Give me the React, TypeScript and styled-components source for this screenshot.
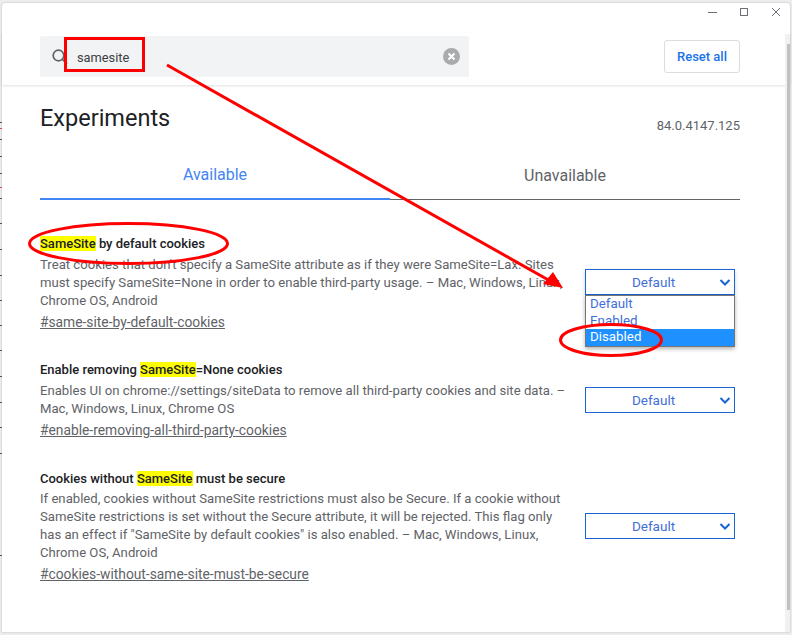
import React from "react";
import styled, { createGlobalStyle } from "styled-components";

const Global = createGlobalStyle`
  html, body { margin: 0; padding: 0; background: #e8e8e8; }
  body { font-family: Roboto, "Liberation Sans", sans-serif; overflow: hidden; }
`;

const Stage = styled.div`
  position: relative;
  width: 792px;
  height: 635px;
  overflow: hidden;
  background: #ededed;
  padding: 3px 2px 3px 2px;
  box-sizing: border-box;
`;

const Tick = styled.i<{ $top: number; $red?: boolean }>`
  position: absolute;
  left: 0;
  width: 2px;
  height: 1px;
  top: ${(p) => p.$top}px;
  background: ${(p) => (p.$red ? "#e04848" : "#555")};
`;

const Win = styled.div`
  position: relative;
  width: 100%;
  height: 100%;
  background: #fff;
  border-radius: 3px 3px 0 0;
  display: flex;
  flex-direction: column;
  box-shadow: 0 0 2px rgba(0, 0, 0, 0.25);
`;

const Caption = styled.div`
  height: 30px;
  display: flex;
  justify-content: flex-end;
  align-items: flex-start;
  padding: 1px 5px 0 0;
  box-sizing: border-box;
  gap: 15px;
  color: #6b6f75;
  flex: none;
`;

const CapBtn = styled.svg`
  width: 17px;
  height: 17px;
  display: block;
`;

const Header = styled.header`
  height: 52px;
  flex: none;
  display: flex;
  align-items: flex-start;
  justify-content: space-between;
  padding: 3px 50px 0 38px;
  box-sizing: border-box;
  box-shadow: 0 1px 2px rgba(0, 0, 0, 0.12);
  position: relative;
  z-index: 1;
`;

const Search = styled.div`
  width: 429px;
  height: 41px;
  background: #f1f3f4;
  border-radius: 2px;
  display: flex;
  align-items: center;
  box-sizing: border-box;
  padding: 0 9px 0 11px;
  color: #5f6368;
`;

const SearchText = styled.span`
  flex: 1;
  font-size: 12.8px;
  color: #3c4043;
  margin-left: 8px;
  margin-top: 1px;
`;

const ResetBtn = styled.button`
  width: 76px;
  height: 33px;
  margin-top: 4px;
  background: #fff;
  border: 1px solid #dadce0;
  border-radius: 3px;
  font: 500 13px Roboto, sans-serif;
  color: #1a73e8;
  padding: 0;
`;

const Scroll = styled.div`
  flex: 1;
  display: flex;
  min-height: 0;
`;

const Main = styled.main`
  flex: 1;
  padding: 0 45px 0 38px;
`;

const ScrollBar = styled.div`
  width: 5px;
  flex: none;
  background: #f1f1f1;
  margin-top: -51px;
  position: relative;
  z-index: 2;
  display: flex;
  flex-direction: column;
  align-items: flex-end;
`;

const Thumb = styled.div`
  margin-top: 10px;
  width: 3px;
  height: 566px;
  background: #c1c1c1;
`;

const TitleRow = styled.div`
  display: flex;
  justify-content: space-between;
  align-items: flex-start;
  padding-top: 18px;
  height: 35px;
`;

const H1 = styled.h1`
  margin: 0;
  font-size: 23.5px;
  line-height: 30px;
  font-weight: 400;
  color: #202124;
`;

const Version = styled.span`
  margin-top: 15px;
  font-size: 13px;
  line-height: 16px;
  color: #5f6368;
`;

const Tabs = styled.div`
  display: flex;
  margin-top: 9px;
  height: 53px;
`;

const Tab = styled.div<{ $active?: boolean }>`
  flex: 1;
  box-sizing: border-box;
  border-bottom: ${(p) => (p.$active ? "2px solid #4285f4" : "1px solid #5f6368")};
  color: ${(p) => (p.$active ? "#4285f4" : "#5f6368")};
  text-align: center;
  font-size: 16px;
  line-height: 20px;
  padding-top: ${(p) => (p.$active ? 18 : 19)}px;
`;

const Flag = styled.section<{ $mt: number }>`
  display: flex;
  justify-content: space-between;
  margin-top: ${(p) => p.$mt}px;
`;

const FlagText = styled.div`
  width: 530px;
`;

const FlagTitle = styled.h2`
  margin: 0;
  font-size: 13px;
  line-height: 16px;
  font-weight: 500;
  color: #202124;
`;

const Mark = styled.mark`
  background: #ffff00;
  color: #202124;
`;

const Desc = styled.p<{ $mt?: number }>`
  margin: ${(p) => p.$mt ?? 4}px 0 0;
  font-size: 13.15px;
  line-height: 18px;
  color: #5f6368;
`;

const Link = styled.a`
  display: block;
  margin-top: 3px;
  font-size: 13.8px;
  line-height: 18px;
  color: #5f6368;
  text-decoration: underline;
`;

const SelectBox = styled.div<{ $mt: number; $shadow?: boolean }>`
  width: 150px;
  height: 26px;
  box-sizing: border-box;
  margin: ${(p) => p.$mt}px 5px 0 0;
  border: 1px solid #1a65d1;
  display: flex;
  align-items: center;
  position: relative;
  color: #3f6fd8;
  font-size: 13.5px;
  flex: none;
  ${(p) => (p.$shadow ? "box-shadow: 0 2px 4px rgba(0,0,0,.2);" : "")}
`;

const SelectLabel = styled.span`
  flex: 1;
  text-align: center;
  padding-right: 13px;
`;

const Chev = styled.svg`
  position: absolute;
  right: 3px;
  top: 7px;
  width: 12px;
  height: 10px;
`;

const Menu = styled.ul`
  position: absolute;
  left: 583px;
  top: 292px;
  width: 150px;
  box-sizing: border-box;
  height: 52px;
  margin: 0;
  padding: 0;
  list-style: none;
  background: #fff;
  border: 1px solid #767676;
  box-shadow: 0 2px 4px rgba(0, 0, 0, 0.3);
  z-index: 3;
  font-size: 13.33px;
`;

const MenuItem = styled.li<{ $sel?: boolean }>`
  height: 16.67px;
  line-height: 16px;
  padding-left: 4px;
  background: ${(p) => (p.$sel ? "#1e90ff" : "transparent")};
  color: ${(p) => (p.$sel ? "#fff" : "#3f6fd8")};
`;

const Overlay = styled.svg`
  position: absolute;
  left: 0;
  top: 0;
  width: 792px;
  height: 635px;
  z-index: 5;
  pointer-events: none;
`;

const Chevron = () => (
  <Chev viewBox="0 0 12 10">
    <path d="M1.5 3 L6 7.5 L10.5 3" fill="none" stroke="#1a65d1" strokeWidth="2" />
  </Chev>
);

const Select = ({ mt, shadow }: { mt: number; shadow?: boolean }) => (
  <SelectBox $mt={mt} $shadow={shadow}>
    <SelectLabel>Default</SelectLabel>
    <Chevron />
  </SelectBox>
);

const ticks = [122, 128, 139, 156, 173, 187, 198, 223, 249, 275, 300, 325, 350, 376, 402, 427, 453, 555];

export default function App() {
  return (
    <Stage>
      <Global />
      {ticks.map((t) => (
        <Tick key={t} $top={t} $red={t === 128 || t === 187} />
      ))}
      <Win>
        <Caption>
          <CapBtn viewBox="0 0 17 17">
            <path d="M4 8.5h9" stroke="currentColor" fill="none" />
          </CapBtn>
          <CapBtn viewBox="0 0 17 17">
            <rect x="4.5" y="4.5" width="7" height="7" stroke="currentColor" fill="none" />
          </CapBtn>
          <CapBtn viewBox="0 0 17 17">
            <path d="M4 4l8 8M12 4l-8 8" stroke="currentColor" fill="none" />
          </CapBtn>
        </Caption>
        <Header>
          <Search>
            <svg width="18" height="18" viewBox="0 0 18 18">
              <circle cx="7.5" cy="7.5" r="5.3" fill="none" stroke="#5f6368" strokeWidth="1.7" />
              <path d="M11.5 11.5l4.5 4.5" stroke="#5f6368" strokeWidth="1.7" />
            </svg>
            <SearchText>samesite</SearchText>
            <svg width="17" height="17" viewBox="0 0 17 17">
              <circle cx="8.5" cy="8.5" r="8.5" fill="#a9abaf" />
              <path d="M5.5 5.5l6 6M11.5 5.5l-6 6" stroke="#fff" strokeWidth="2" />
            </svg>
          </Search>
          <ResetBtn>Reset all</ResetBtn>
        </Header>
        <Scroll>
          <Main>
            <TitleRow>
              <H1>Experiments</H1>
              <Version>84.0.4147.125</Version>
            </TitleRow>
            <Tabs>
              <Tab $active>Available</Tab>
              <Tab>Unavailable</Tab>
            </Tabs>
            <Flag $mt={36}>
              <FlagText>
                <FlagTitle>
                  <Mark>SameSite</Mark> by default cookies
                </FlagTitle>
                <Desc>
                  Treat cookies that don't specify a SameSite attribute as if they were SameSite=Lax. Sites must specify
                  SameSite=None in order to enable third-party usage. – Mac, Windows, Linux, Chrome OS, Android
                </Desc>
                <Link>#same-site-by-default-cookies</Link>
              </FlagText>
              <Select mt={33} shadow />
            </Flag>
            <Flag $mt={31}>
              <FlagText>
                <FlagTitle>
                  Enable removing <Mark>SameSite</Mark>=None cookies
                </FlagTitle>
                <Desc>
                  Enables UI on chrome://settings/siteData to remove all third-party cookies and site data. – Mac,
                  Windows, Linux, Chrome OS
                </Desc>
                <Link>#enable-removing-all-third-party-cookies</Link>
              </FlagText>
              <Select mt={25} />
            </Flag>
            <Flag $mt={32}>
              <FlagText>
                <FlagTitle>
                  Cookies without <Mark>SameSite</Mark> must be secure
                </FlagTitle>
                <Desc $mt={3}>
                  If enabled, cookies without SameSite restrictions must also be Secure. If a cookie without SameSite
                  restrictions is set without the Secure attribute, it will be rejected. This flag only has an effect if
                  "SameSite by default cookies" is also enabled. – Mac, Windows, Linux, Chrome OS, Android
                </Desc>
                <Link>#cookies-without-same-site-must-be-secure</Link>
              </FlagText>
              <Select mt={42} />
            </Flag>
          </Main>
          <ScrollBar>
            <Thumb />
          </ScrollBar>
        </Scroll>
        <Menu>
          <MenuItem>Default</MenuItem>
          <MenuItem>Enabled</MenuItem>
          <MenuItem $sel>Disabled</MenuItem>
        </Menu>
      </Win>
      <Overlay viewBox="0 0 792 635">
        <rect x="65.5" y="38.5" width="78" height="32" fill="none" stroke="#ff0000" strokeWidth="3" />
        <path d="M167 65 L552 282" stroke="#ff0000" strokeWidth="3" fill="none" />
        <path d="M563 288 L543 284 L553 272 Z" fill="#ff0000" />
        <ellipse cx="128.5" cy="243.5" rx="99" ry="20" fill="none" stroke="#ff0000" strokeWidth="3" />
        <ellipse cx="611" cy="340" rx="50.5" ry="15.5" fill="none" stroke="#ff0000" strokeWidth="3" />
      </Overlay>
    </Stage>
  );
}
